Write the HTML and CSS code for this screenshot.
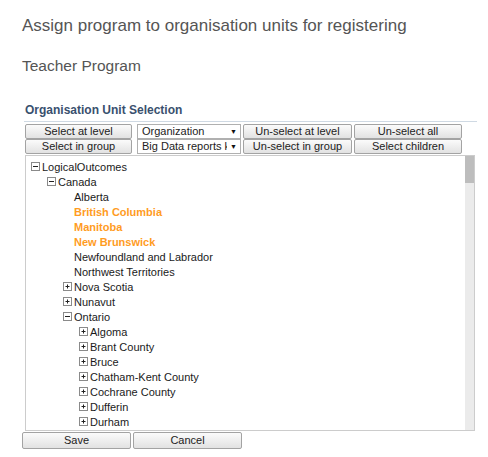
FILE: index.html
```html
<!DOCTYPE html>
<html>
<head>
<meta charset="utf-8">
<link rel="stylesheet" href="styles.css">
</head>
<body>
<div class="page">
  <h1 class="title">Assign program to organisation units for registering</h1>
  <h2 class="subtitle">Teacher Program</h2>
  <div class="section">
    <h3 class="section-head">Organisation Unit Selection</h3>
    <div class="controls">
      <button class="btn">Select at level</button>
      <div class="combo"><span class="combo-text">Organization</span><span class="combo-arrow">&#9660;</span></div>
      <button class="btn">Un-select at level</button>
      <button class="btn">Un-select all</button>
      <button class="btn">Select in group</button>
      <div class="combo"><span class="combo-text">Big Data reports key</span><span class="combo-arrow">&#9660;</span></div>
      <button class="btn">Un-select in group</button>
      <button class="btn">Select children</button>
    </div>
    <div class="tree-box">
      <div class="tree">
        <div class="node l0"><span class="tg"><svg width="9" height="9" viewBox="0 0 9 9"><rect x="0.5" y="0.5" width="8" height="8" fill="#fff" stroke="#8a8a8a"/><path d="M2 4.5h5" stroke="#222"/></svg></span>LogicalOutcomes</div>
        <div class="node l1"><span class="tg"><svg width="9" height="9" viewBox="0 0 9 9"><rect x="0.5" y="0.5" width="8" height="8" fill="#fff" stroke="#8a8a8a"/><path d="M2 4.5h5" stroke="#222"/></svg></span>Canada</div>
        <div class="node l2"><span class="tg"></span>Alberta</div>
        <div class="node l2 sel"><span class="tg"></span>British Columbia</div>
        <div class="node l2 sel"><span class="tg"></span>Manitoba</div>
        <div class="node l2 sel"><span class="tg"></span>New Brunswick</div>
        <div class="node l2"><span class="tg"></span>Newfoundland and Labrador</div>
        <div class="node l2"><span class="tg"></span>Northwest Territories</div>
        <div class="node l2"><span class="tg"><svg width="9" height="9" viewBox="0 0 9 9"><rect x="0.5" y="0.5" width="8" height="8" fill="#fff" stroke="#8a8a8a"/><path d="M2.5 4.5h4M4.5 2.5v4" stroke="#222"/></svg></span>Nova Scotia</div>
        <div class="node l2"><span class="tg"><svg width="9" height="9" viewBox="0 0 9 9"><rect x="0.5" y="0.5" width="8" height="8" fill="#fff" stroke="#8a8a8a"/><path d="M2.5 4.5h4M4.5 2.5v4" stroke="#222"/></svg></span>Nunavut</div>
        <div class="node l2"><span class="tg"><svg width="9" height="9" viewBox="0 0 9 9"><rect x="0.5" y="0.5" width="8" height="8" fill="#fff" stroke="#8a8a8a"/><path d="M2 4.5h5" stroke="#222"/></svg></span>Ontario</div>
        <div class="node l3"><span class="tg"><svg width="9" height="9" viewBox="0 0 9 9"><rect x="0.5" y="0.5" width="8" height="8" fill="#fff" stroke="#8a8a8a"/><path d="M2.5 4.5h4M4.5 2.5v4" stroke="#222"/></svg></span>Algoma</div>
        <div class="node l3"><span class="tg"><svg width="9" height="9" viewBox="0 0 9 9"><rect x="0.5" y="0.5" width="8" height="8" fill="#fff" stroke="#8a8a8a"/><path d="M2.5 4.5h4M4.5 2.5v4" stroke="#222"/></svg></span>Brant County</div>
        <div class="node l3"><span class="tg"><svg width="9" height="9" viewBox="0 0 9 9"><rect x="0.5" y="0.5" width="8" height="8" fill="#fff" stroke="#8a8a8a"/><path d="M2.5 4.5h4M4.5 2.5v4" stroke="#222"/></svg></span>Bruce</div>
        <div class="node l3"><span class="tg"><svg width="9" height="9" viewBox="0 0 9 9"><rect x="0.5" y="0.5" width="8" height="8" fill="#fff" stroke="#8a8a8a"/><path d="M2.5 4.5h4M4.5 2.5v4" stroke="#222"/></svg></span>Chatham-Kent County</div>
        <div class="node l3"><span class="tg"><svg width="9" height="9" viewBox="0 0 9 9"><rect x="0.5" y="0.5" width="8" height="8" fill="#fff" stroke="#8a8a8a"/><path d="M2.5 4.5h4M4.5 2.5v4" stroke="#222"/></svg></span>Cochrane County</div>
        <div class="node l3"><span class="tg"><svg width="9" height="9" viewBox="0 0 9 9"><rect x="0.5" y="0.5" width="8" height="8" fill="#fff" stroke="#8a8a8a"/><path d="M2.5 4.5h4M4.5 2.5v4" stroke="#222"/></svg></span>Dufferin</div>
        <div class="node l3"><span class="tg"><svg width="9" height="9" viewBox="0 0 9 9"><rect x="0.5" y="0.5" width="8" height="8" fill="#fff" stroke="#8a8a8a"/><path d="M2.5 4.5h4M4.5 2.5v4" stroke="#222"/></svg></span>Durham</div>
      </div>
      <div class="scrollbar"><div class="thumb"></div></div>
    </div>
  </div>
  <div class="footer">
    <button class="btn">Save</button>
    <button class="btn">Cancel</button>
  </div>
</div>
</body>
</html>
```

FILE: styles.css
```css
html, body {
  margin: 0;
  padding: 0;
  background: #fff;
}
body {
  font-family: "Liberation Sans", Arial, sans-serif;
  color: #222;
}
.page {
  padding: 15px 0 0 22px;
}
.title {
  margin: 0;
  font-size: 17px;
  font-weight: normal;
  line-height: 22px;
  color: #555;
}
.subtitle {
  margin: 19px 0 0 0;
  font-size: 15.5px;
  font-weight: normal;
  line-height: 20px;
  color: #555;
}
.section {
  margin: 0 0 0 2px;
  width: 453px;
}
.section-head {
  margin: 27px 0 0 0;
  padding: 0 0 4px 1px;
  font-size: 12px;
  font-weight: bold;
  line-height: 14px;
  color: #39506e;
  border-bottom: 1px solid #cfd9e3;
}
.controls {
  display: grid;
  grid-template-columns: 107px 107px 109px 108px;
  grid-auto-rows: 15px;
  column-gap: 2px;
  row-gap: 0;
  margin: 2px 0 0 1px;
}
.controls .combo {
  margin-left: 3px;
}
.btn {
  margin: 0;
  padding: 0;
  height: 15px;
  font-family: "Liberation Sans", Arial, sans-serif;
  font-size: 11px;
  line-height: 13px;
  color: #222;
  background: linear-gradient(to bottom, #fbfbfb, #e2e2e2);
  border: 1px solid #a3a3a3;
  border-radius: 2px;
  text-align: center;
}
.combo {
  display: flex;
  align-items: center;
  height: 15px;
  box-sizing: border-box;
  border: 1px solid #b0b0b0;
  background: #fff;
  font-size: 11px;
  line-height: 13px;
  color: #222;
  padding: 0 0 0 4px;
  overflow: hidden;
}
.combo-text {
  flex: 1;
  min-width: 0;
  white-space: nowrap;
  overflow: hidden;
  text-overflow: clip;
}
.combo-arrow {
  width: 13px;
  flex: none;
  padding-left: 3px;
  box-sizing: border-box;
  font-size: 7px;
  text-align: left;
  color: #111;
}
.tree-box {
  display: flex;
  margin: 1px 0 0 1px;
  width: 450px;
  height: 276px;
  box-sizing: border-box;
  border: 1px solid #cccccc;
}
.tree {
  flex: 1;
  overflow: hidden;
  padding: 3px 0 0 5px;
  font-size: 11px;
}
.node {
  display: flex;
  align-items: center;
  height: 15px;
  white-space: nowrap;
  color: #1a1a1a;
}
.node.l1 { padding-left: 16px; }
.node.l2 { padding-left: 32px; }
.node.l3 { padding-left: 48px; }
.node.sel {
  color: #ff9c1f;
  font-weight: bold;
}
.tg {
  display: inline-flex;
  align-items: center;
  width: 11px;
  height: 15px;
  flex: none;
}
.tg svg {
  display: block;
}
.scrollbar {
  width: 9px;
  flex: none;
  background: #ebebeb;
}
.thumb {
  height: 27px;
  background: #bdbdbd;
}
.footer {
  display: flex;
  gap: 2px;
  margin-top: 1px;
}
.footer .btn {
  width: 109px;
  height: 17px;
  line-height: 15px;
  font-size: 11px;
}
```
